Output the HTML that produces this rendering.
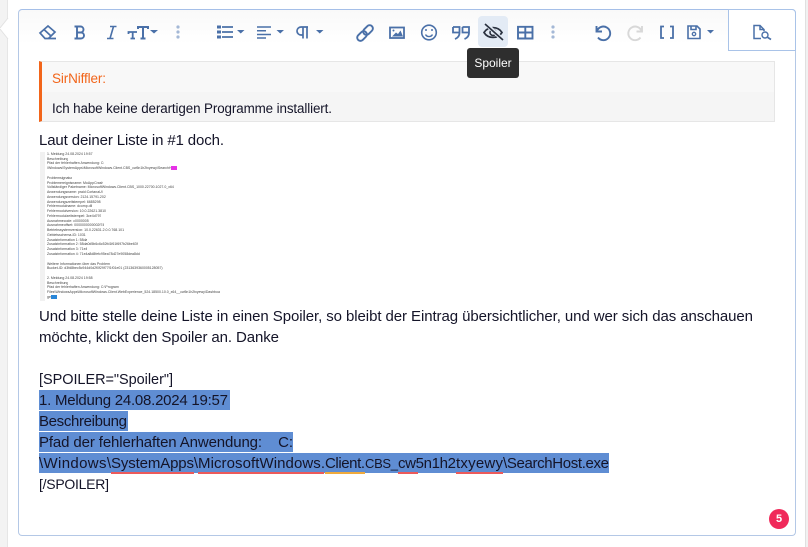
<!DOCTYPE html>
<html><head><meta charset="utf-8">
<style>
html,body{margin:0;padding:0;background:#fff;}
body{width:808px;height:547px;position:relative;overflow:hidden;font-family:"Liberation Sans",sans-serif;color:#141428;}
.abs{position:absolute;}
.sel{position:absolute;background:#5f8dd3;height:20px;}
.ic{position:absolute;top:0;left:0;}
.sq{position:absolute;height:2px;}
.tiny{position:absolute;left:47px;white-space:pre;font-size:3.5px;line-height:4px;height:4px;color:#444;filter:blur(.3px);max-width:173px;overflow:hidden;}
svg text{font-family:"Liberation Sans",sans-serif;font-size:15px;fill:#141428;white-space:pre;}
</style></head><body>
<div class="abs" style="left:0;top:0;width:7px;height:547px;background:#f3f3f3;border-right:1px solid #e6e6e6"></div>
<svg class="abs" style="left:0;top:0" width="12" height="60"><path d="M8 18 L0 28 L0 29 L8 39Z" fill="#fff"/><path d="M8 18 L0 28 M0 29 L8 39" fill="none" stroke="#e2e2e2"/></svg>
<div class="abs" style="left:805px;top:0;width:3px;height:547px;background:#f1f1f1;border-left:1px solid #e0e0e0"></div>
<div class="abs" style="left:18px;top:9px;width:776px;height:525px;border:1px solid #b4c8e6;border-top-color:#a5bfe8;border-radius:4px;background:linear-gradient(#f9f9f9 0,#fff 34px)"></div>
<div class="abs" style="left:728px;top:9px;width:68px;height:42px;box-sizing:border-box;border:1px solid #a9c3e8;border-radius:0 4px 0 0;background:#fff"></div>
<div class="abs" style="left:478px;top:16px;width:30px;height:31px;background:#e3ebf5;border-radius:4px"></div>

<svg class="ic" width="808" height="60" fill="none" stroke="#4a70a8" stroke-width="1.7">
<!-- eraser -->
<path d="M40 33 L48 26 L55 32 L48.500 38.500 H45 Z M44 29.500 L51 36 M48 38.500 H56"/>
<!-- B -->
<path d="M74.500 26.500 H80.500 a3 3 0 0 1 0 6 H77 M77 32.500 H81 a3 3 0 0 1 0 6 H74.500 M77 26.500 V38.500" stroke-width="1.900"/>
<!-- I -->
<path d="M110 26.500 H116.500 M107 38.500 H113.500 M113.500 26.500 L110 38.500" stroke-width="1.600"/>
<!-- TT -->
<path d="M138 29 V27 H148 V29 M143 27 V38.500 M140.500 38.500 H145.500" stroke-width="2"/>
<path d="M128.500 34 V32 H137 M132.700 32 V38.500 M130.500 38.500 H135" stroke-width="1.800"/>
<path d="M150 30 h8 l-4 3.500z M237 30 h7.500 l-3.750 3.500z M276.500 30 h7.500 l-3.750 3.500z M316 30 h7.500 l-3.750 3.500z M707 30 h7 l-3.500 3.500z" fill="#4a70a8" stroke="none"/>
<!-- dots -->
<g fill="#a4b8d6" stroke="none"><circle cx="178" cy="27" r="1.600"/><circle cx="178" cy="32" r="1.600"/><circle cx="178" cy="37" r="1.600"/>
<circle cx="553" cy="27" r="1.600"/><circle cx="553" cy="32" r="1.600"/><circle cx="553" cy="37" r="1.600"/></g>
<!-- list -->
<path d="M222 27 H233 M222 32 H233 M222 37 H233"/>
<path d="M217 25.500 h4 v3 h-4z M217 30.500 h4 v3 h-4z M217 35.500 h4 v3 h-4z" fill="#4a70a8" stroke="none"/>
<!-- align -->
<path d="M257 27 H271 M257 30.800 H266 M257 34.500 H271 M257 38 H266" stroke-width="1.500"/>
<!-- pilcrow -->
<path d="M308 27 H301 a4 4 0 0 0 0 8 H303 M303 27 V38.500 M307 27 V38.500" stroke-width="1.700"/>
<!-- link -->
<rect x="356.500" y="32.800" width="11" height="6.500" rx="3.250" transform="rotate(-45 362 36)" stroke-width="1.900"/>
<rect x="362.500" y="26.800" width="11" height="6.500" rx="3.250" transform="rotate(-45 368 30)" stroke-width="1.900"/>
<!-- image -->
<rect x="390" y="27.500" width="14" height="10.500" stroke-width="1.800"/>
<path d="M392 36.500 L396 32.500 L398 34 L400.500 30.500 L403 36.500Z" fill="#4a70a8" stroke="none"/>
<circle cx="393.500" cy="30.500" r="1" fill="#4a70a8" stroke="none"/>
<!-- smile -->
<circle cx="429" cy="32.500" r="7.300" stroke-width="1.600"/>
<path d="M425.500 34.500 a4 4 0 0 0 7 0" stroke-width="1.400"/>
<circle cx="426" cy="30" r="1" fill="#4a70a8" stroke="none"/><circle cx="432" cy="30" r="1" fill="#4a70a8" stroke="none"/>
<!-- quote -->
<path d="M453 27 H459.500 V33 C459.500 36 457.500 38 455 39 M453 27 V32.500 H459.500 M462.500 27 H469 V33 C469 36 467 38 464.500 39 M462.500 27 V32.500 H469" stroke-width="1.800"/>
<!-- eye off -->
<path d="M484 32.500 C488 26 498 26 502 32.500 C498 39 488 39 484 32.500Z" stroke="#2b3240" stroke-width="1.700"/>
<circle cx="493" cy="32.500" r="3" stroke="#2b3240" stroke-width="1.600"/>
<path d="M486 24 L503 40" stroke="#e3ebf5" stroke-width="4"/>
<path d="M485 24 L503 40" stroke="#2b3240" stroke-width="1.600"/>
<!-- table -->
<path d="M518 26.800 H532.500 V38.500 H518Z M518 32.500 H532.500 M525.300 26.800 V38.500" stroke-width="1.900"/>
<!-- undo -->
<path d="M596.500 26 V31.500 H602 M597 31 A6.800 6.800 0 1 1 598 37.500" stroke-width="1.900"/>
<!-- redo -->
<path d="M642 26 V31.500 H636.500 M641.500 31 A6.800 6.800 0 1 0 640.500 37.500" stroke="#d8d8d8" stroke-width="1.900"/>
<!-- brackets -->
<path d="M664 26.500 H661 V38 H664 M670 26.500 H673 V38 H670" stroke-width="1.800"/>
<!-- save -->
<path d="M688 26 H697 L700 29 V38.500 H688Z M691 26 V29.500 H696 V26" stroke-width="1.600"/>
<circle cx="694" cy="34" r="1.700" stroke-width="1.300"/>
<!-- preview -->
<path d="M761 38.500 H754 V25.500 H760 L764 29.500 V31 M760 25.500 V29.500 H764" stroke-width="1.500"/>
<circle cx="765" cy="35" r="3" stroke-width="1.400"/>
<path d="M767.500 37.300 L771 39.500" stroke-width="1.700"/>
</svg>

<!-- quote -->
<div class="abs" style="left:39px;top:61px;width:736px;height:61px;box-sizing:border-box;border:1px solid #e6e6e6;border-left:3px solid #f2651a;background:#f8f8f8"></div>
<div class="abs" style="left:42px;top:92px;width:732px;height:29px;background:#f5f5f5"></div>

<!-- tiny image -->
<div class="abs" style="left:40px;top:152px;width:5px;height:149px;background:#f1f1f1"></div>
<div class="tiny" style="top:152px">1. Meldung 24.08.2024 19:57</div>
<div class="tiny" style="top:157px">Beschreibung</div>
<div class="tiny" style="top:161px">Pfad der fehlerhaften Anwendung: C:</div>
<div class="tiny" style="top:166px">\Windows\SystemApps\MicrosoftWindows.Client.CBS_cw5n1h2txyewy\SearchHost</div>
<div class="abs" style="left:171px;top:166px;width:6px;height:4px;background:#e632e6"></div>
<div class="tiny" style="top:176px">Problemsignatur</div>
<div class="tiny" style="top:181px">Problemereignisname: MoAppCrash</div>
<div class="tiny" style="top:185px">Vollständiger Paketname: MicrosoftWindows.Client.CBS_1000.22700.1027.0_x64</div>
<div class="tiny" style="top:190px">Anwendungsname: praid:CortanaUI</div>
<div class="tiny" style="top:195px">Anwendungsversion: 2124.15791.202</div>
<div class="tiny" style="top:200px">Anwendungszeitstempel: 6685298</div>
<div class="tiny" style="top:204px">Fehlermodulname: dcomp.dll</div>
<div class="tiny" style="top:209px">Fehlermodulversion: 10.0.22621.3810</div>
<div class="tiny" style="top:214px">Fehlermodulzeitstempel: 3ce4d797</div>
<div class="tiny" style="top:219px">Ausnahmecode: c0000005</div>
<div class="tiny" style="top:223px">Ausnahmeoffset: 0000000000002f74</div>
<div class="tiny" style="top:228px">Betriebssystemversion: 10.0.22631.2.0.0.768.101</div>
<div class="tiny" style="top:233px">Gebietsschema-ID: 1031</div>
<div class="tiny" style="top:238px">Zusatzinformation 1: 58da</div>
<div class="tiny" style="top:242px">Zusatzinformation 2: 58da0d5b6c6c52fd1f61f697b26be63f</div>
<div class="tiny" style="top:247px">Zusatzinformation 3: 71e4</div>
<div class="tiny" style="top:252px">Zusatzinformation 4: 71e4a8d8fefc95ea78d27e9058dea8dd</div>
<div class="tiny" style="top:262px">Weitere Informationen über das Problem</div>
<div class="tiny" style="top:266px">Bucket-ID: d3fd8bec5c944d0d2f0f29f77f1f01e01 (2313639360005128057)</div>
<div class="tiny" style="top:276px">2. Meldung 24.08.2024 19:58</div>
<div class="tiny" style="top:281px">Beschreibung</div>
<div class="tiny" style="top:285px">Pfad der fehlerhaften Anwendung: C:\Program</div>
<div class="tiny" style="top:290px">Files\WindowsApps\MicrosoftWindows.Client.WebExperience_524.18500.10.0_x64__cw5n1h2txyewy\Dashboard\Wid</div>
<div class="tiny" style="top:295px">get</div>
<div class="abs" style="left:51px;top:295px;width:6px;height:4px;background:#2a86d8"></div>

<div class="sel" style="left:39px;top:390px;width:191px"></div>
<div class="sel" style="left:39px;top:411px;width:89px"></div>
<div class="sel" style="left:39px;top:432px;width:254px"></div>
<div class="sel" style="left:39px;top:453px;width:570px"></div>
<div class="sq" style="left:111px;top:472px;width:83px;background:#ec5a5a"></div>
<div class="sq" style="left:198px;top:472px;width:126px;background:#ec5a5a"></div>
<div class="sq" style="left:325px;top:472px;width:40px;background:#f0aa3c"></div>
<div class="sq" style="left:398px;top:472px;width:20px;background:#ec5a5a"></div>
<div class="sq" style="left:456px;top:472px;width:47px;background:#ec5a5a"></div>

<svg class="abs" style="left:0;top:0" width="808" height="547" xml:space="preserve">
<text x="52" y="83" textLength="54" lengthAdjust="spacing" style="font-size:13.500px;fill:#f2651a">SirNiffler:</text>
<text x="52" y="113" textLength="280" lengthAdjust="spacing" style="font-size:13.400px">Ich habe keine derartigen Programme installiert.</text>
<text x="39" y="145" textLength="185">Laut deiner Liste in #1 doch.</text>
<text x="39" y="321" textLength="714">Und bitte stelle deine Liste in einen Spoiler, so bleibt der Eintrag übersichtlicher, und wer sich das anschauen</text>
<text x="39" y="342" textLength="240">möchte, klickt den Spoiler an. Danke</text>
<text x="39" y="384" textLength="134" style="font-size:14.500px">[SPOILER="Spoiler"]</text>
<text x="39" y="405" textLength="189">1. Meldung 24.08.2024 19:57</text>
<text x="39" y="426" textLength="88">Beschreibung</text>
<text x="39" y="447" textLength="254">Pfad der fehlerhaften Anwendung:    C:</text>
<text x="39" y="468" textLength="72">\Windows\</text>
<text x="111" y="468" textLength="87">SystemApps\</text>
<text x="198" y="468" textLength="127">MicrosoftWindows.</text>
<text x="325" y="468" textLength="40">Client.</text>
<text x="365" y="468" textLength="33" style="font-size:13px">CBS_</text>
<text x="398" y="468" textLength="58">cw5n1h2</text>
<text x="456" y="468" textLength="47">txyewy</text>
<text x="503" y="468" textLength="106">\SearchHost.exe</text>
<text x="39" y="489" textLength="70" style="font-size:14px">[/SPOILER]</text>
</svg>

<!-- tooltip -->
<div class="abs" style="left:467px;top:48px;width:52px;height:30px;background:#2e2e2e;border-radius:3px;color:#fff;font-size:12px;line-height:30px;text-align:center;z-index:5">Spoiler</div>

<div class="abs" style="left:769px;top:509px;width:20px;height:20px;border-radius:50%;background:#f0295a;color:#fff;font-size:11px;font-weight:700;line-height:20px;text-align:center">5</div>
</body></html>
